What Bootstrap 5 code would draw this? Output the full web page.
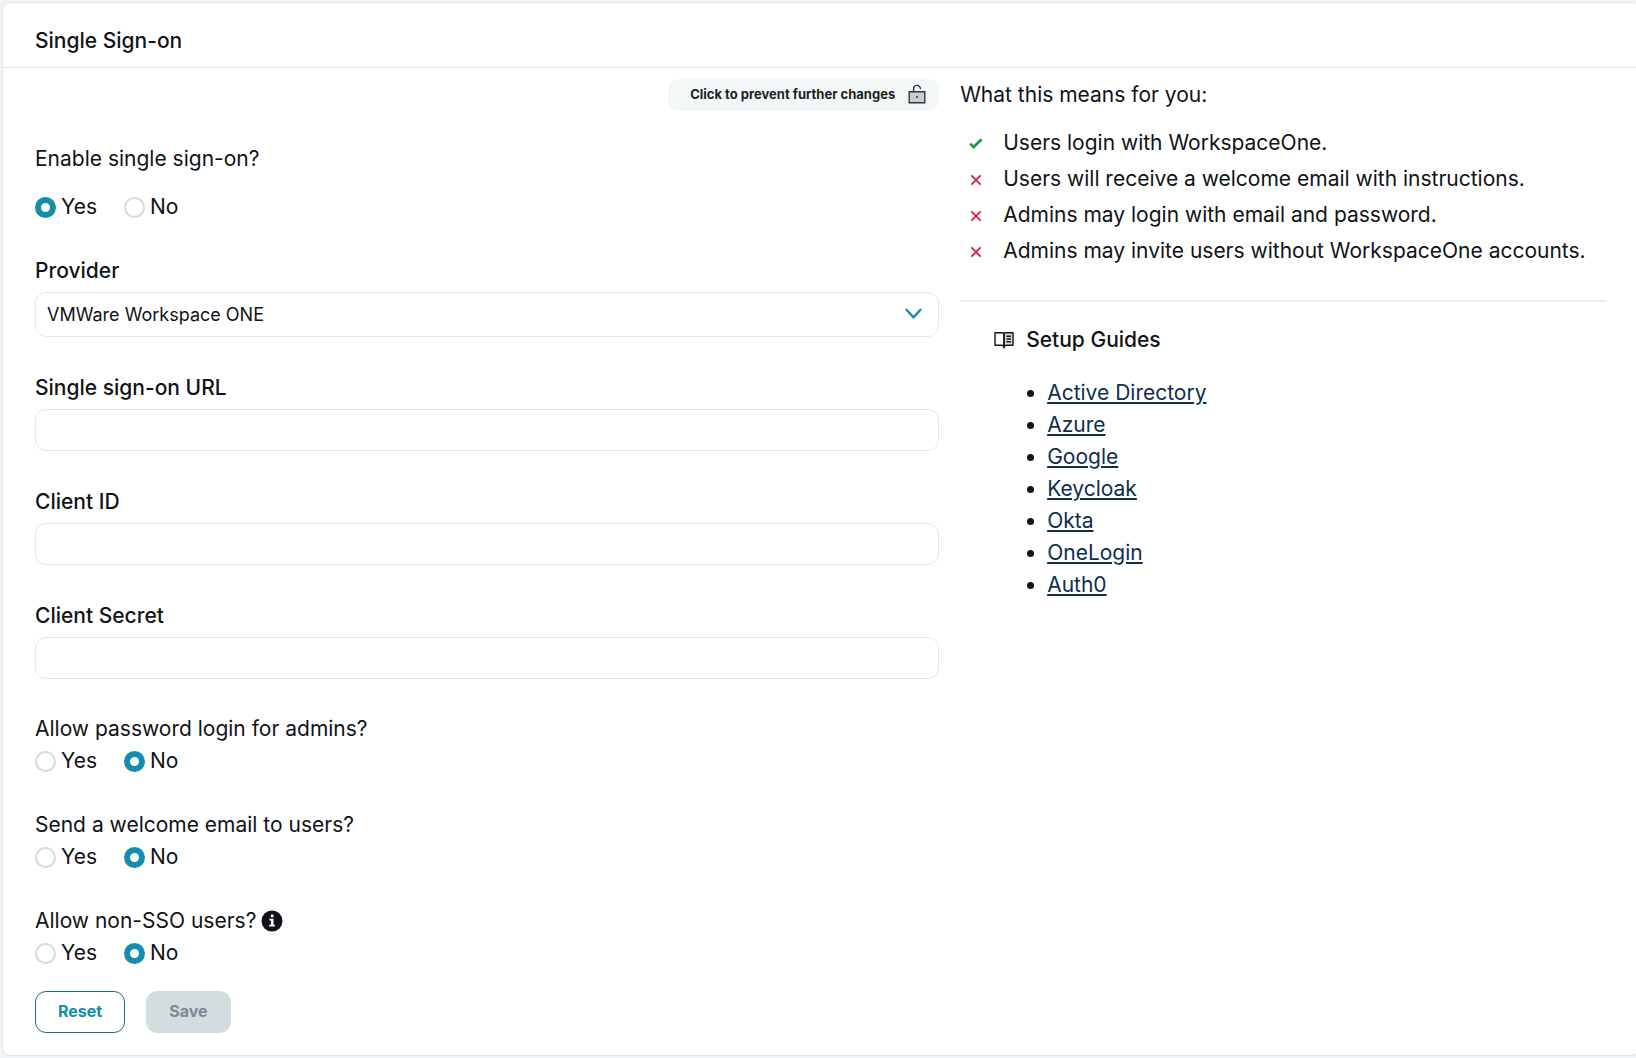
<!DOCTYPE html>
<html lang="en">
<head>
<meta charset="utf-8">
<meta name="viewport" content="width=device-width, initial-scale=1">
<title>Single Sign-on</title>
<link href="https://cdn.jsdelivr.net/npm/bootstrap@5.3.0/dist/css/bootstrap.min.css" rel="stylesheet">
<style>
  :root { --ink: #101317; --teal: #138eab; --edge: #e6e9eb; }
  body { font-family: Inter, "Liberation Sans", sans-serif; font-size: 21px; line-height: 32px; color: var(--ink); background: #f0f4f8; }
  .page-wrap { padding: 2px 0 2px 2px; overflow-x: hidden; }
  .sso-card { --bs-card-border-color: #dfe4e8; --bs-card-border-radius: 8px; --bs-card-inner-border-radius: 7px; color: var(--ink); margin-right: -3px; }
  .sso-card > .card-header { background: #fff; padding: 22px 32px 10px; border-bottom: 1px solid var(--edge); }
  .sso-card > .card-body { padding: 11px 32px 22px; }
  .sso-title, .field-label, .guides-title { font-size: 21px; line-height: 32px; font-weight: 500; margin: 0; }
  .cols { gap: 21px; }
  .col-form { flex: 7 1 0; min-width: 0; }
  .col-info { flex: 5 1 0; min-width: 0; }
  .lock-btn { height: 32px; padding: 0 13px 2px 22px; gap: 13px; border: 0; border-radius: 11px; background: #f3f7f8; color: #1b1f24; font-size: 13px; line-height: 20px; font-weight: 700; }
  .choice { font-size: 21px; line-height: 32px; margin: 0; float: none; }
  .choices { gap: 27px; }
  .block-first { margin-top: 32px; }
  .block-first .choices { margin-top: 16px; }
  .block-gap { margin-top: 32px; }
  .field { margin-bottom: 35px; }
  .field-last { margin-bottom: 34px; }
  .field-label { display: block; margin-bottom: 5px; }
  .radio-dot.form-check-input { width: 21px; height: 21px; margin: 0 5px 0 0; border: 2px solid #d3dcdf; background-color: #fff; float: none; flex: none; }
  .radio-dot.form-check-input:checked { border: 6px solid var(--teal); background-image: none; background-color: #fff; }
  .box.form-control, .box.form-select { height: 42px; border: 1px solid var(--edge); border-radius: 11px; color: var(--ink); background-color: #fff; padding: 0 11px; font-size: 18px; line-height: 24px; }
  .box.form-select { height: 45px; background-image: none; }
  .select-wrap { position: relative; }
  .select-wrap svg { position: absolute; right: 17px; top: 16px; pointer-events: none; }
  .info-icon { margin-left: 5px; }
  .actions { margin-top: 22px; gap: 21px; }
  .act { height: 42px; padding: 0 22px 2px; border-radius: 11px; font-size: 16px; line-height: 24px; font-weight: 700; }
  .act-reset { border: 1px solid #156f8e; color: var(--teal); background: #fff; }
  .act-save.btn:disabled { border-color: #d3dcdf; background: #d3dcdf; color: #7d8792; opacity: 1; }
  .facts { margin: 14px 0 31px; line-height: 36px; }
  .facts li { gap: 19px; padding-left: 8px; }
  .facts svg { flex: none; }
  .rule { height: 2px; margin: 0 0 22px; border: 0; background: #e8edf1; opacity: 1; }
  .guides { padding-left: 34px; }
  .guides-title { gap: 12px; }
  .guides ul { margin: 21px 0 0; padding-left: 53px; }
  .guides a { color: #0f2e4f; text-decoration: underline; }
</style>
</head>
<body>
<div class="page-wrap">
  <main class="card sso-card">
    <div class="card-header"><h1 class="sso-title">Single Sign-on</h1></div>
    <div class="card-body d-flex cols">
      <form class="col-form">
        <div class="d-flex justify-content-end">
          <button type="button" class="btn lock-btn d-flex align-items-center">Click to prevent further changes
            <svg width="18" height="20" viewBox="0 0 18 20" fill="none" stroke="#33373c" stroke-width="1.4" aria-hidden="true"><path d="M1.2 7.7h15.6v11H1.2z" fill="#c9cdd1"/><path d="M5.6 7.5V5a3.4 3.4 0 0 1 6.8-.5" stroke-linecap="round"/><circle cx="9" cy="13" r="1" fill="#33373c" stroke="none"/></svg>
          </button>
        </div>

        <div class="block-first" role="radiogroup" aria-labelledby="q1">
          <div id="q1">Enable single sign-on?</div>
          <div class="d-flex choices">
            <label class="choice d-flex align-items-center"><input class="form-check-input radio-dot" type="radio" name="enable" checked>Yes</label>
            <label class="choice d-flex align-items-center"><input class="form-check-input radio-dot" type="radio" name="enable">No</label>
          </div>
        </div>

        <div class="field block-gap">
          <label class="field-label" for="provider">Provider</label>
          <div class="select-wrap">
            <select class="form-select box" id="provider"><option>VMWare Workspace ONE</option></select>
            <svg width="17" height="12" viewBox="0 0 17 12" fill="none" stroke="#138eab" stroke-width="2.4" stroke-linecap="round" stroke-linejoin="round" aria-hidden="true"><path d="M1.5 1.8 8.5 9.4l7-7.6"/></svg>
          </div>
        </div>
        <div class="field">
          <label class="field-label" for="url">Single sign-on URL</label>
          <input class="form-control box" id="url" type="text">
        </div>
        <div class="field">
          <label class="field-label" for="cid">Client ID</label>
          <input class="form-control box" id="cid" type="text">
        </div>
        <div class="field-last">
          <label class="field-label" for="secret">Client Secret</label>
          <input class="form-control box" id="secret" type="text">
        </div>

        <div role="radiogroup" aria-labelledby="q2">
          <div id="q2">Allow password login for admins?</div>
          <div class="d-flex choices">
            <label class="choice d-flex align-items-center"><input class="form-check-input radio-dot" type="radio" name="pw">Yes</label>
            <label class="choice d-flex align-items-center"><input class="form-check-input radio-dot" type="radio" name="pw" checked>No</label>
          </div>
        </div>
        <div class="block-gap" role="radiogroup" aria-labelledby="q3">
          <div id="q3">Send a welcome email to users?</div>
          <div class="d-flex choices">
            <label class="choice d-flex align-items-center"><input class="form-check-input radio-dot" type="radio" name="mail">Yes</label>
            <label class="choice d-flex align-items-center"><input class="form-check-input radio-dot" type="radio" name="mail" checked>No</label>
          </div>
        </div>
        <div class="block-gap" role="radiogroup" aria-labelledby="q4">
          <div id="q4" class="d-flex align-items-center">Allow non-SSO users?
            <svg class="info-icon" width="22" height="22" viewBox="0 0 22 22" aria-hidden="true"><circle cx="11" cy="11" r="10.5" fill="#101317"/><path d="M9.9 4.6h2.6v2.6H9.9zM8.4 8.8h4.1v5.9h1.3v1.7H8.2v-1.7h1.7v-4.2H8.4z" fill="#fff"/></svg>
          </div>
          <div class="d-flex choices">
            <label class="choice d-flex align-items-center"><input class="form-check-input radio-dot" type="radio" name="non">Yes</label>
            <label class="choice d-flex align-items-center"><input class="form-check-input radio-dot" type="radio" name="non" checked>No</label>
          </div>
        </div>

        <div class="d-flex actions">
          <button type="reset" class="btn act act-reset">Reset</button>
          <button type="submit" class="btn act act-save" disabled>Save</button>
        </div>
      </form>

      <section class="col-info">
        <div>What this means for you:</div>
        <ul class="list-unstyled facts">
          <li class="d-flex align-items-center"><svg width="16" height="16" viewBox="0 0 16 16" fill="none" stroke="#12a150" stroke-width="2.7" aria-hidden="true"><path d="m2.2 8.6 3.4 3.4 8-7.8"/></svg>Users login with WorkspaceOne.</li>
          <li class="d-flex align-items-center"><svg width="16" height="16" viewBox="0 0 16 16" fill="none" stroke="#dc1f45" stroke-width="1.9" aria-hidden="true"><path d="m3.4 4.4 9.2 9.2m0-9.2-9.2 9.2"/></svg>Users will receive a welcome email with instructions.</li>
          <li class="d-flex align-items-center"><svg width="16" height="16" viewBox="0 0 16 16" fill="none" stroke="#dc1f45" stroke-width="1.9" aria-hidden="true"><path d="m3.4 4.4 9.2 9.2m0-9.2-9.2 9.2"/></svg>Admins may login with email and password.</li>
          <li class="d-flex align-items-center"><svg width="16" height="16" viewBox="0 0 16 16" fill="none" stroke="#dc1f45" stroke-width="1.9" aria-hidden="true"><path d="m3.4 4.4 9.2 9.2m0-9.2-9.2 9.2"/></svg>Admins may invite users without WorkspaceOne accounts.</li>
        </ul>
        <hr class="rule">
        <div class="guides">
          <h2 class="guides-title d-flex align-items-center">
            <svg width="20" height="18" viewBox="0 0 20 18" fill="none" stroke="#101317" stroke-width="1.4" stroke-linejoin="round" aria-hidden="true"><path d="M10 3.4C10 2.3 11 1.7 12 1.7h7v12.6h-6.2c-1.4 0-2.8.4-2.8 1.4z" fill="#d9dbdd"/><path d="M10 3.4C10 2.3 9 1.7 8 1.7H1v12.6h6.2c1.4 0 2.8.4 2.8 1.4z"/><path d="M12.4 5.2h4.6M12.4 8h4.6M12.4 10.8h4.6M10 14.5v3"/></svg>
            Setup Guides</h2>
          <ul>
            <li><a href="#">Active Directory</a></li>
            <li><a href="#">Azure</a></li>
            <li><a href="#">Google</a></li>
            <li><a href="#">Keycloak</a></li>
            <li><a href="#">Okta</a></li>
            <li><a href="#">OneLogin</a></li>
            <li><a href="#">Auth0</a></li>
          </ul>
        </div>
      </section>
    </div>
  </main>
</div>
<script src="https://cdn.jsdelivr.net/npm/bootstrap@5.3.0/dist/js/bootstrap.bundle.min.js"></script>
</body>
</html>
